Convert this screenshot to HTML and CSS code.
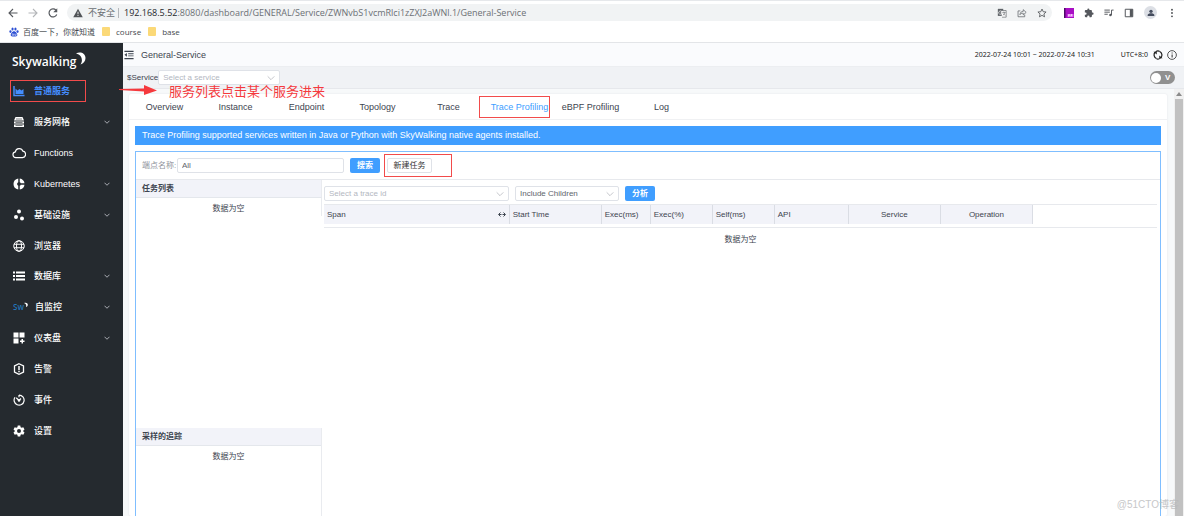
FILE: index.html
```html
<!DOCTYPE html>
<html lang="zh-CN">
<head>
<meta charset="utf-8">
<title>General-Service</title>
<link rel="stylesheet" href="styles.css">
</head>
<body>
<header class="browser">
  <div class="address-row">
    <button class="icon-btn" aria-label="Back"><svg class="ic12" viewBox="0 0 24 24"><path d="M21 12H4M12 4l-8 8 8 8" fill="none" stroke="#55585d" stroke-width="2.2"/></svg></button>
    <button class="icon-btn" aria-label="Forward"><svg class="ic12" viewBox="0 0 24 24"><path d="M3 12h17M12 4l8 8-8 8" fill="none" stroke="#b4b6b9" stroke-width="2.2"/></svg></button>
    <button class="icon-btn" aria-label="Reload"><svg class="ic12" viewBox="0 0 24 24"><path d="M19.5 15a8 8 0 1 1-1.5-8.5" fill="none" stroke="#55585d" stroke-width="2.4"/><path d="M20.500 2.500v8h-8z" fill="#55585d"/></svg></button>
    <div class="address">
      <svg class="ic10" viewBox="0 0 24 24"><path d="M12 2L0.500 22h23z" fill="#505357"/><path d="M11 9h2v6h-2zM11 17h2v2h-2z" fill="#fff"/></svg>
      <span class="insecure">不安全</span>
      <span class="divider"></span>
      <span class="url"><b>192.168.5.52</b>:8080/dashboard/GENERAL/Service/ZWNvbS1vcmRlci1zZXJ2aWNl.1/General-Service</span>
      <span class="address-icons">
        <svg class="ic10" viewBox="0 0 24 24"><path d="M2 2h13v17H2z" fill="#5f6368"/><path d="M10 6h12v16H12" fill="#fff" stroke="#5f6368" stroke-width="1.600"/><path d="M12.500 10.500h8M16.500 8.500v2M19 10.500c-1 4-3 6-5 7M14.500 13l5 5" fill="none" stroke="#5f6368" stroke-width="1.500"/><path d="M11 8.500a4 4 0 1 0 1 3H8.500" fill="none" stroke="#fff" stroke-width="1.600"/></svg>
        <svg class="ic10" viewBox="0 0 24 24"><path d="M8 7H2.500v14h16v-5" fill="none" stroke="#5f6368" stroke-width="1.800"/><path d="M7 16c1-6 4-8 8-8V4l7 6.500-7 6v-4c-4 0-6 1-8 3.500z" fill="none" stroke="#5f6368" stroke-width="1.800"/></svg>
        <svg class="ic10" viewBox="0 0 24 24"><path d="M12 2.500l2.900 6.400 6.900.7-5.200 4.700 1.500 6.900-6.100-3.600-6.100 3.600 1.500-6.900-5.200-4.700 6.900-.7z" fill="none" stroke="#505357" stroke-width="2"/></svg>
      </span>
    </div>
    <div class="extensions">
      <svg class="ic10" viewBox="0 0 20 20"><path d="M0 0h20v20H0z" fill="#a80fc4"/><path d="M0 0h3v20H0z" fill="#4d0c68"/><path d="M7 12h12v6H7z" fill="#dc69ed"/><path d="M9 17v-4h2v2H9M14 17v-4h2v2h-2" fill="none" stroke="#fff"/></svg>
      <svg class="ic10" viewBox="0 0 24 24"><path d="M20.500 11H19V7a2 2 0 0 0-2-2h-4V3.500a2.500 2.500 0 0 0-5 0V5H4a2 2 0 0 0-2 2v3.800h1.500a2.700 2.700 0 0 1 0 5.400H2V20a2 2 0 0 0 2 2h3.800v-1.500a2.700 2.700 0 0 1 5.400 0V22H17a2 2 0 0 0 2-2v-4h1.500a2.500 2.500 0 0 0 0-5z" fill="#55585d"/></svg>
      <svg class="ic10" viewBox="0 0 24 24"><path d="M1 5h13M1 10h13M1 15h8M18 17V5h5" fill="none" stroke="#55585d" stroke-width="2.300"/><circle cx="15.500" cy="17" r="3" fill="#55585d"/></svg>
      <svg class="ic10" viewBox="0 0 24 24"><path d="M3 3h18v18H3z" fill="none" stroke="#55585d" stroke-width="2.400"/><path d="M14 3h7v18h-7z" fill="#55585d"/></svg>
      <span class="avatar"><svg class="ic8" viewBox="0 0 24 24"><circle cx="12" cy="7" r="5" fill="#444c5d"/><path d="M2 21v-3c0-3 6-5 10-5s10 2 10 5v3z" fill="#444c5d"/></svg></span>
      <svg class="ic10" viewBox="0 0 24 24"><g fill="#505357"><circle cx="12" cy="4" r="2.300"/><circle cx="12" cy="12" r="2.300"/><circle cx="12" cy="20" r="2.300"/></g></svg>
    </div>
  </div>
  <nav class="bookmarks">
    <a href="#"><svg class="ic10" viewBox="0 0 24 24"><g fill="#2c4fd4"><ellipse cx="8.500" cy="5" rx="2.600" ry="3.600"/><ellipse cx="15.500" cy="5" rx="2.600" ry="3.600"/><ellipse cx="3.500" cy="11" rx="2.600" ry="3.300"/><ellipse cx="20.500" cy="11" rx="2.600" ry="3.300"/><path d="M12 10c4 0 8 6 8 9s-3 4-8 4-8-1-8-4 4-9 8-9z"/></g><path d="M8 15v5h3v-4M14 16v4h3v-4" fill="none" stroke="#fff" stroke-width="1.300"/></svg>百度一下，你就知道</a>
    <a href="#"><span class="folder"></span>course</a>
    <a href="#"><span class="folder"></span>base</a>
  </nav>
</header>

<div class="app">
  <aside class="sidebar">
    <div class="logo"><span>Sky<span class="logo-w">walking</span></span><svg class="moon" viewBox="0 0 11 14"><path d="M1 1.500C5-.8 10.500 1 10.500 6c0 3.200-2 5.500-5 6.500C8 9 7.500 3 1 1.500z" fill="#fff"/></svg></div>
    <nav class="menu">
      <a class="item active" href="#"><svg class="ic12" viewBox="0 0 24 24"><path d="M2 2v19h21" fill="none" stroke="#448dfe" stroke-width="3"/><path d="M5 18V7l4 4 4-3 4 3 4-3v10z" fill="#448dfe"/></svg><span>普通服务</span><i class="mark mark-menu"></i></a>
      <a class="item" href="#"><svg class="ic12" viewBox="0 0 24 24"><path d="M5 2h14l3 7H2z"/><path d="M2 11h20v4H2zM2 17h20v5H2z"/><path d="M6 6h12M5 13h14M5 19h14" stroke="#252a2f" stroke-width="1.200"/></svg><span>服务网格</span><svg class="chev" viewBox="0 0 12 12"><path d="M1 3.500l5 5 5-5"/></svg></a>
      <a class="item" href="#"><svg class="ic14" viewBox="0 0 24 24"><path d="M6.500 20a5 5 0 0 1-.8-9.900 6.800 6.800 0 0 1 13-1.200A5.600 5.600 0 0 1 18 20z" fill="none" stroke="#fff" stroke-width="2"/></svg><span>Functions</span></a>
      <a class="item" href="#"><svg class="ic12" viewBox="0 0 24 24"><path d="M10.500 1v7.500a3.800 3.800 0 0 0 0 7V23C4.500 22 1 18 1 12S4.500 2 10.500 1zM13.500 1C19 2 22.500 5.500 23 10.500h-7.500a3 3 0 0 0-2-2zM13.500 15.500a3 3 0 0 0 2-2H23c-.5 5-4 8.500-9.500 9.500z"/></svg><span>Kubernetes</span><svg class="chev" viewBox="0 0 12 12"><path d="M1 3.500l5 5 5-5"/></svg></a>
      <a class="item" href="#"><svg class="ic12" viewBox="0 0 24 24"><circle cx="12" cy="5" r="4"/><circle cx="6" cy="16" r="4"/><circle cx="18" cy="19" r="4"/></svg><span>基础设施</span><svg class="chev" viewBox="0 0 12 12"><path d="M1 3.500l5 5 5-5"/></svg></a>
      <a class="item" href="#"><svg class="ic12" viewBox="0 0 24 24"><g fill="none" stroke="#fff" stroke-width="2"><circle cx="12" cy="12" r="10.500"/><ellipse cx="12" cy="12" rx="5" ry="10.500"/><path d="M2 8.500h20M2 15.500h20"/></g></svg><span>浏览器</span></a>
      <a class="item" href="#"><svg class="ic12" viewBox="0 0 24 24"><path d="M0 3h4v4H0zM6 3h18v4H6zM0 10h4v4H0zM6 10h18v4H6zM0 17h4v4H0zM6 17h18v4H6z"/></svg><span>数据库</span><svg class="chev" viewBox="0 0 12 12"><path d="M1 3.500l5 5 5-5"/></svg></a>
      <a class="item" href="#"><span class="mini-logo">Sw<svg class="mini-moon" viewBox="0 0 11 14"><path d="M0 1.500C5-.8 10.500 1 10.500 6c0 3.200-2 5.500-5 6.500C7 9 6.500 4 0 1.500z"/></svg></span><span>自监控</span><svg class="chev" viewBox="0 0 12 12"><path d="M1 3.500l5 5 5-5"/></svg></a>
      <a class="item" href="#"><svg class="ic12" viewBox="0 0 24 24"><path d="M1 1h10v10H1zM13 1h10v10H13zM1 13h10v10H1zM17 14h3v3h3v3h-3v3h-3v-3h-3v-3h3z"/></svg><span>仪表盘</span><svg class="chev" viewBox="0 0 12 12"><path d="M1 3.500l5 5 5-5"/></svg></a>
      <a class="item" href="#"><svg class="ic12" viewBox="0 0 24 24"><path d="M12 1.500l9 4.500v12l-9 4.500L3 18V6z" fill="none" stroke="#fff" stroke-width="2.600"/><path d="M10.500 6h3v8h-3zM10.500 15.500h3v3h-3z"/></svg><span>告警</span></a>
      <a class="item" href="#"><svg class="ic12" viewBox="0 0 24 24"><path d="M12 2.200A10 10 0 1 1 4 6.500M12 2v4.500M12 13L6.500 7.500M12 13l4-4" fill="none" stroke="#fff" stroke-width="2.400"/><circle cx="12" cy="13" r="2.500"/></svg><span>事件</span></a>
      <a class="item" href="#"><svg class="ic12" viewBox="0 0 24 24"><path fill-rule="evenodd" d="M9.500 1h5l.7 3.300 2.200 1.200L20.600 4.500 23 8.800l-2.400 2.200v2L23 15.200l-2.400 4.300-3.200-1-2.200 1.200-.7 3.300h-5l-.7-3.300-2.200-1.200-3.200 1L1 15.200 3.400 13v-2L1 8.800l2.400-4.300 3.200 1 2.200-1.200zM12 8a4 4 0 1 0 0 8 4 4 0 0 0 0-8z"/></svg><span>设置</span></a>
    </nav>
  </aside>

  <main class="main">
    <div class="topbar">
      <svg class="ic10" viewBox="0 0 24 24"><path d="M1 2h22v3H1zM10 8h13v2H10zM10 13h13v2H10zM1 19h22v3H1zM7 7v9L1 11.500z" fill="#3d444f"/></svg>
      <h1>General-Service</h1>
      <span class="time">2022-07-24 10:01 ~ 2022-07-24 10:31</span>
      <span class="zone">UTC+8:0</span>
      <button class="icon-btn" aria-label="Refresh"><svg class="ic10" viewBox="0 0 24 24"><path d="M8 20.500A9.500 9.500 0 0 1 5 5.500M16 3.500a9.500 9.500 0 0 1 3 15" fill="none" stroke="#222" stroke-width="3"/><path d="M6 4.500C10 1.500 14 2 16 3.500M18 19.500c-4 3-8 2.500-10 1" fill="none" stroke="#222" stroke-width="2.500"/><path d="M1 4h8v7zM23 20h-8v-7z" fill="#222"/></svg></button>
      <button class="icon-btn" aria-label="Info"><svg class="ic10" viewBox="0 0 24 24"><circle cx="12" cy="12" r="10.500" fill="none" stroke="#333" stroke-width="2"/><path d="M11 6h2.500v2.500H11zM11 10.500h2.500V18H11z" fill="#333"/></svg></button>
    </div>
    <div class="toolbar">
      <label for="service">$Service</label>
      <span class="select service-select"><select id="service" class="empty"><option>Select a service</option></select><svg class="chev" viewBox="0 0 12 12"><path d="M1 3.500l5 5 5-5"/></svg></span>
      <label class="switch"><input type="checkbox" aria-label="View mode"><span>V</span></label>
      <div class="note">
        <svg class="arrow" viewBox="0 0 38 12"><path d="M0 5l25-.5V1l13 5.500L25 11V7.500L0 6z" fill="#f5393d"/></svg>
        <span>服务列表点击某个服务进来</span>
      </div>
    </div>
    <div class="content">
      <section class="card">
        <nav class="tabs">
          <a href="#">Overview</a><a href="#">Instance</a><a href="#">Endpoint</a><a href="#">Topology</a><a href="#">Trace</a><a class="current" href="#">Trace Profiling<i class="mark mark-tab"></i></a><a href="#">eBPF Profiling</a><a href="#">Log</a>
        </nav>
        <div class="banner">Trace Profiling supported services written in Java or Python with SkyWalking native agents installed.</div>
        <div class="panel">
          <form class="search">
            <label for="endpoint">端点名称:</label>
            <input id="endpoint" type="text" value="All">
            <button type="button" class="btn primary">搜索</button>
            <span class="new-task"><button type="button" class="btn plain">新建任务</button><i class="mark mark-task"></i></span>
          </form>
          <div class="columns">
            <div class="lists">
              <section class="tasks"><h2>任务列表</h2><p>数据为空</p></section>
              <section class="samples"><h2>采样的追踪</h2><p>数据为空</p></section>
            </div>
            <div class="detail">
              <div class="filters">
                <span class="select trace-select"><select class="empty" aria-label="Trace id"><option>Select a trace id</option></select><svg class="chev" viewBox="0 0 12 12"><path d="M1 3.500l5 5 5-5"/></svg></span>
                <span class="select mode-select"><select aria-label="Mode"><option>Include Children</option></select><svg class="chev" viewBox="0 0 12 12"><path d="M1 3.500l5 5 5-5"/></svg></span>
                <button type="button" class="btn primary">分析</button>
              </div>
              <div class="table-wrap">
                <table>
                  <colgroup><col class="w-span"><col class="w-wide"><col class="w-ms"><col class="w-mid"><col class="w-mid"><col class="w-api"><col class="w-wide"><col class="w-wide"></colgroup>
                  <thead><tr><th><span class="span-head">Span<svg class="resize" viewBox="0 0 16 10"><path d="M5 1L1 5l4 4M11 1l4 4-4 4M2 5h4M10 5h4M7 5h2" /></svg></span></th><th>Start Time</th><th>Exec(ms)</th><th>Exec(%)</th><th>Self(ms)</th><th>API</th><th class="mid">Service</th><th class="mid">Operation</th></tr></thead>
                </table>
              </div>
              <p>数据为空</p>
            </div>
          </div>
        </div>
      </section>
      <div class="scrollbar"><svg class="up" viewBox="0 0 10 10"><path d="M5 3l3 4H2z" fill="#8b8b8b"/></svg><span class="thumb"></span></div>
    </div>
  </main>
</div>
<div class="watermark">@51CTO博客</div>
</body>
</html>
```
FILE: styles.css
```css
* { box-sizing: border-box; }
html, body { height: 100%; }
body {
  margin: 0;
  display: flex;
  flex-direction: column;
  overflow: hidden;
  background: #fff;
  color: #3d444f;
  font-family: "Liberation Sans", "Noto Sans CJK SC", sans-serif;
  font-size: 8px;
  line-height: 12px;
}
a { color: inherit; text-decoration: none; }
h1, h2, p { margin: 0; font-weight: normal; }
svg { display: block; flex: none; }
button, input, select { font: inherit; margin: 0; }
.icon-btn { border: 0; padding: 0; background: none; }
.ic8 { width: 8px; height: 8px; }
.ic10 { width: 10px; height: 10px; }
.ic12 { width: 12px; height: 12px; }
.ic14 { width: 14px; height: 14px; }

/* Browser frame */
.browser { flex: none; height: 43px; border-bottom: 1px solid #e3e5e8; font-family: "Open Sans", "Noto Sans CJK SC", sans-serif; }
.address-row { display: flex; align-items: center; gap: 8px; height: 24px; padding: 3px 8px 3px 7px; border-top: 1px solid #e6e8eb; }
.address { flex: 1; display: flex; align-items: center; height: 17px; padding: 0 5px 0 6px; border-radius: 9px; background: #f1f3f4; font-size: 9px; color: #6c7075; }
.insecure { margin-left: 5px; white-space: nowrap; }
.divider { width: 1px; height: 10px; margin: 0 5px 0 3px; background: #b4b7bb; }
.url { font-size: 9px; white-space: nowrap; }
.url b { font-weight: normal; color: #25282c; }
.address-icons { display: flex; gap: 10px; margin-left: auto; }
.extensions { display: flex; align-items: center; gap: 10px; margin-left: 4px; }
.extensions .ic10:last-child { margin-right: -1px; }
.avatar { display: grid; place-items: center; width: 13px; height: 13px; border-radius: 50%; background: #dcdfe5; }
.bookmarks { display: flex; align-items: center; gap: 7px; height: 15px; padding: 0 9px; color: #45494e; }
.bookmarks a { display: flex; align-items: center; gap: 4px; }
.bookmarks a + a { gap: 6px; }
.folder { width: 8px; height: 9px; border-radius: 1px; background: #fbd978; }

/* Application */
.app { flex: 1; display: flex; min-height: 0; }
.sidebar { flex: none; width: 123px; background: #252a2f; color: #fff; }
.logo { display: flex; height: 33px; padding: 9px 0 0 12px; font: 600 12px/20px "Open Sans", sans-serif; }
.moon { width: 11px; height: 14px; margin-left: -2px; }
.menu { display: grid; grid-auto-rows: 1fr; height: 370px; }
.item { position: relative; display: flex; align-items: center; gap: 9px; padding: 0 13px; font-size: 9px; font-weight: 500; }
.item svg { fill: #fff; }
.item .ic14 { margin-right: -1px; margin-left: -1px; }
.item.active { color: #448dfe; font-weight: bold; }
.item .chev { margin-left: auto; }
.chev { width: 6px; height: 6px; }
.chev path { fill: none; stroke: #a8abb2; stroke-width: 2; }
.mini-logo { display: flex; width: 13px; color: #2475b9; font: 600 8px/12px "Open Sans", sans-serif; }
.item .mini-moon { width: 4px; height: 6px; margin-top: 1px; }

.mark { position: absolute; border: 1px solid #f24b4b; pointer-events: none; }
.mark-menu { inset: 4px 37px 5px 10px; }
.mark-tab { inset: 2px 5px 1px -5px; }
.mark-task { inset: -4px -20px -4px -3px; }

.main { flex: 1; display: flex; flex-direction: column; min-width: 0; }
.topbar { flex: none; display: flex; align-items: center; gap: 4px; height: 24px; padding: 0 7px 0 1px; background: #fafbfd; border-bottom: 1px solid #eceef1; }
.topbar h1 { margin: 0 auto 0 3px; font-size: 9px; }
.time, .zone { font-family: "Noto Sans", sans-serif; font-size: 7px; color: #222; }
.zone { margin-left: 22px; margin-right: 1px; }
.toolbar { position: relative; flex: none; display: flex; align-items: center; height: 22px; padding: 0 9px 0 4px; background: #f0f2f5; border-bottom: 1px solid #e6e8ec; }
.select { display: flex; align-items: center; position: relative; height: 15px; }
.select select { width: 100%; height: 100%; padding: 0 4px; appearance: none; border: 1px solid #dfe2e8; border-radius: 2px; background: #fff; color: #60646b; }
.select select.empty { color: #b3b7bf; }
.select .chev { position: absolute; right: 5px; width: 8px; height: 8px; pointer-events: none; }
.select .chev path { stroke-width: 1; }
.service-select { width: 122px; }
.switch { position: relative; display: flex; align-items: center; width: 25px; height: 13px; margin-left: auto; border-radius: 7px; background: #909090; color: #fff; font-weight: bold; }
.switch input { appearance: none; width: 10px; height: 10px; margin: 0 4px 0 1px; border-radius: 50%; background: #fff; }
.note { position: absolute; top: 15px; left: -4px; display: flex; align-items: center; gap: 12px; color: #f5393d; font-size: 13px; line-height: 20px; white-space: nowrap; pointer-events: none; }
.arrow { width: 38px; height: 12px; margin-bottom: 4px; }

.content { flex: 1; display: flex; min-height: 0; background: #f7f9fa; }
.card { flex: 1; display: flex; flex-direction: column; min-width: 0; margin: 5px 7px 0 6px; border-radius: 2px; background: #fff; box-shadow: 0 0 2px #dfe2e6; }
.tabs { flex: none; display: flex; height: 26px; border-bottom: 1px solid #f0f1f3; font-size: 9px; line-height: 26px; }
.tabs a { position: relative; width: 71px; text-align: center; white-space: nowrap; }
.tabs .current { color: #409eff; }
.banner { flex: none; margin: 6px 6px 0; padding: 0 7px; background: #409eff; color: #fff; font-size: 9px; line-height: 19px; }
.panel { flex: 1; display: flex; flex-direction: column; min-height: 0; margin: 6px 6px 0; border: 1px solid #7fbeff; border-bottom: 0; }
.search { flex: none; display: flex; align-items: center; height: 28px; padding: 0 6px; border-bottom: 1px solid #e7e9ed; }
.search label { width: 35px; color: #8f949c; white-space: nowrap; }
.search input { width: 167px; height: 15px; padding: 0 4px; border: 1px solid #dfe2e8; border-radius: 2px; color: #60646b; }
.btn { height: 15px; padding: 0 7px; border: 0; border-radius: 2px; line-height: 15px; white-space: nowrap; }
.primary { width: 30px; background: #409eff; color: #fff; font-weight: bold; }
.search .primary { margin: 0 7px 0 6px; }
.new-task { position: relative; display: flex; }
.plain { width: 45px; padding: 0; border: 1px solid #dfe2e8; background: #fff; color: #333; line-height: 13px; }
.columns { flex: 1; display: flex; min-height: 0; }
.lists { flex: none; display: flex; flex-direction: column; width: 186px; }
.tasks { height: 248px; }
.samples { flex: 1; border-right: 1px solid #e9ebef; }
.lists h2 { height: 18px; padding: 0 6px; border-bottom: 1px solid #e4e7ec; background: #f2f3f9; font-size: 8px; font-weight: bold; line-height: 17px; }
.lists p { height: 18px; padding-top: 5px; text-align: center; }
.tasks h2, .tasks p { border-right: 1px solid #e9ebef; }
.detail { flex: 1; min-width: 0; padding: 6px 3px 0 2px; }
.filters { display: flex; gap: 6px; padding-bottom: 3px; }
.trace-select { width: 185px; }
.mode-select { width: 104px; }
.table-wrap { height: 24px; border-top: 1px solid #e7e9ed; border-bottom: 1px solid #e7e9ed; }
table { table-layout: fixed; width: 709px; border-collapse: collapse; }
.w-span { width: 185px; }
.w-wide { width: 92px; }
.w-ms { width: 49px; }
.w-mid { width: 62px; }
.w-api { width: 74px; }
th { height: 19px; padding: 0 3px; border-right: 1px solid #dadde4; background: #f2f3f9; font-weight: normal; text-align: left; }
th.mid { text-align: center; }
.span-head { display: flex; align-items: center; justify-content: space-between; }
.resize { width: 8px; height: 5px; }
.resize path { fill: none; stroke: #3d444f; stroke-width: 2; }
.detail p { padding-top: 6px; text-align: center; }

.scrollbar { flex: none; display: flex; flex-direction: column; align-items: center; width: 10px; background: #f1f1f1; }
.up { width: 10px; height: 10px; }
.thumb { flex: 1; width: 8px; background: #c1c1c1; }
.watermark { position: absolute; right: 5px; bottom: 4px; color: #b9babc; font-size: 10px; line-height: 14px; opacity: .8; }
```
